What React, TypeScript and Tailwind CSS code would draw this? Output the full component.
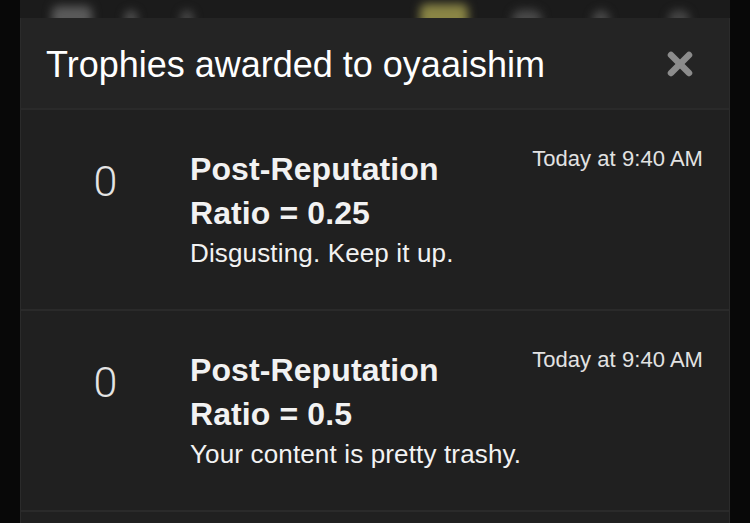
import React from "react";

const rows = [
  { n: "0", title: "Post-Reputation Ratio = 0.25", desc: "Disgusting. Keep it up.", time: "Today at 9:40 AM" },
  { n: "0", title: "Post-Reputation Ratio = 0.5", desc: "Your content is pretty trashy.", time: "Today at 9:40 AM" },
];

export default function App() {
  return (
    <div
      className="w-[750px] h-[523px] overflow-hidden bg-[#080808] flex justify-center"
      style={{ fontFamily: '"Liberation Sans", Arial, sans-serif' }}
    >
      <div className="w-[710px] bg-[#1b1b1b] flex flex-col">
        {/* blurred page header behind the dialog */}
        <div className="h-[18px] shrink-0 overflow-hidden flex items-start pt-[6px] pl-[32px]">
          <div className="w-[40px] h-[22px] rounded-md bg-[#5a5a5a] blur-[5px]" />
          <div className="ml-[32px] mt-[4px] w-[14px] h-[18px] rounded-full bg-[#4a4a4a] blur-[4px]" />
          <div className="ml-[42px] mt-[4px] w-[14px] h-[18px] rounded-full bg-[#444] blur-[4px]" />
          <div className="ml-[226px] mt-[-2px] w-[48px] h-[26px] rounded-md bg-[#8a8545] blur-[5px]" />
          <div className="ml-[44px] mt-[4px] w-[30px] h-[18px] rounded-full bg-[#4a4a4a] blur-[5px]" />
          <div className="ml-[50px] mt-[4px] w-[18px] h-[18px] rounded-full bg-[#474747] blur-[4px]" />
          <div className="ml-[58px] mt-[4px] w-[22px] h-[18px] rounded-full bg-[#444] blur-[4px]" />
        </div>

        <div className="flex-1 bg-[#202020] border-x border-[#2b2b2b]">
          <div className="h-[92px] bg-[#242424] flex items-center justify-between pl-[25px] pr-[36px] border-b-2 border-[#2a2a2a]">
            <h2 className="text-[36px] leading-none text-white tracking-[0px] pt-[3px]">
              Trophies awarded to oyaaishim
            </h2>
            <svg width="26" height="26" viewBox="0 0 26 26" className="mt-[2px]">
              <line x1="4" y1="4" x2="22" y2="22" stroke="#8c8c8c" strokeWidth="6.5" strokeLinecap="round" />
              <line x1="22" y1="4" x2="4" y2="22" stroke="#8c8c8c" strokeWidth="6.5" strokeLinecap="round" />
            </svg>
          </div>

          {rows.map((r, i) => (
            <div key={i} className="h-[201px] flex border-b-2 border-[#2a2a2a]">
              <div
                className="w-[169px] shrink-0 text-center text-[43px] leading-none font-light text-[#e4e4e4] pt-[50px]"
                style={{ fontFamily: 'Roboto, "Liberation Sans", sans-serif' }}
              >
                {r.n}
              </div>
              <div className="flex-1 min-w-0 pt-[37px]">
                <h3 className="max-w-[320px] text-[32px] leading-[44px] font-bold text-[#f2f2f2] tracking-[0.1px]">
                  {r.title}
                </h3>
                <p className="mt-[1px] text-[26px] leading-[34px] text-[#f2f2f2] tracking-[0.15px]">{r.desc}</p>
              </div>
              <div className="shrink-0 pr-[26px] pt-[36px] text-[22px] leading-[26px] text-[#e2e2e2] tracking-[0.05px]">
                {r.time}
              </div>
            </div>
          ))}
        </div>
      </div>
    </div>
  );
}
